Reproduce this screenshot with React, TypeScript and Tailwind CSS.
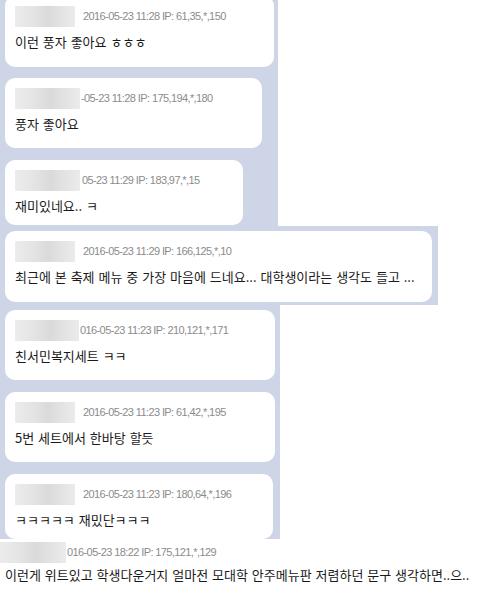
import React from 'react'

type Msg = {
  blur: number
  gap: number
  date: string
  text: string
  w: number
  h: number
}

const BLUE = 'bg-[#cdd5e7]'

function Blur({ w }: { w: number }) {
  return (
    <div
      className="h-[21px] shrink-0 bg-[linear-gradient(90deg,#ececec_0%,#e4e4e4_30%,#dadada_55%,#e2e2e2_75%,#ebebeb_100%)]"
      style={{ width: w }}
    />
  )
}

function Bubble({ m }: { m: Msg }) {
  return (
    <div
      className="rounded-[10px] bg-white pl-[10px] pt-[10px]"
      style={{ width: m.w, height: m.h }}
    >
      <div className="flex h-[21px] items-center">
        <Blur w={m.blur} />
        <span
          className="whitespace-nowrap text-[11px] tracking-[-0.6px] text-[#8b8b8b] [font-family:'Liberation_Sans',Arial,sans-serif]"
          style={{ marginLeft: m.gap }}
        >
          {m.date}
        </span>
      </div>
      <p className="mt-[7px] whitespace-nowrap text-[13px] leading-[16px] text-[#1a1a1a] [word-spacing:1px]">
        {m.text}
      </p>
    </div>
  )
}

const top: Msg[] = [
  { blur: 60, gap: 8, date: '2016-05-23 11:28 IP: 61,35,*,150', text: '이런 풍자 좋아요 ㅎㅎㅎ', w: 269, h: 71 },
  { blur: 65, gap: 1, date: '-05-23 11:28 IP: 175,194,*,180', text: '풍자 좋아요', w: 257, h: 70 },
  { blur: 65, gap: 2, date: '05-23 11:29 IP: 183,97,*,15', text: '재미있네요.. ㅋ', w: 238, h: 65 }
]

const wide: Msg = {
  blur: 60,
  gap: 8,
  date: '2016-05-23 11:29 IP: 166,125,*,10',
  text: '최근에 본 축제 메뉴 중 가장 마음에 드네요... 대학생이라는 생각도 들고 ...',
  w: 427,
  h: 71
}

const bottom: Msg[] = [
  { blur: 64, gap: 1, date: '016-05-23 11:23 IP: 210,121,*,171', text: '친서민복지세트 ㅋㅋ', w: 270, h: 70 },
  { blur: 60, gap: 8, date: '2016-05-23 11:23 IP: 61,42,*,195', text: '5번 세트에서 한바탕 할듯', w: 270, h: 70 },
  { blur: 60, gap: 8, date: '2016-05-23 11:23 IP: 180,64,*,196', text: 'ㅋㅋㅋㅋㅋ 재밌단ㅋㅋㅋ', w: 268, h: 65 }
]

export default function App() {
  return (
    <div className="h-[605px] w-[481px] overflow-hidden bg-white [font-family:'Noto_Sans_CJK_KR','Noto_Sans',sans-serif]">
      <div className={`${BLUE} flex w-[278px] flex-col gap-[11px] pb-[1px] pl-[5px]`}>
        <div className="-mt-[4px]">
          <Bubble m={top[0]} />
        </div>
        <Bubble m={top[1]} />
        <div className="mt-[1px]">
          <Bubble m={top[2]} />
        </div>
      </div>

      <div className={`${BLUE} w-[438px] pb-[3px] pl-[5px] pt-[5px]`}>
        <Bubble m={wide} />
      </div>

      <div className={`${BLUE} flex w-[280px] flex-col gap-[12px] pl-[5px] pt-[5px]`}>
        {bottom.map((m, i) => (
          <Bubble key={i} m={m} />
        ))}
      </div>

      <div className="pt-[4px]">
        <div className="flex h-[18px] items-center">
          <Blur w={66} />
          <span className="ml-[1px] whitespace-nowrap text-[11px] tracking-[-0.6px] text-[#8b8b8b] [font-family:'Liberation_Sans',Arial,sans-serif]">
            016-05-23 18:22 IP: 175,121,*,129
          </span>
        </div>
        <p className="mt-[6px] whitespace-nowrap pl-[5px] text-[13px] leading-[16px] text-[#1a1a1a] [word-spacing:1px]">
          이런게 위트있고 학생다운거지 얼마전 모대학 안주메뉴판 저렴하던 문구 생각하면..으..
        </p>
      </div>
    </div>
  )
}
